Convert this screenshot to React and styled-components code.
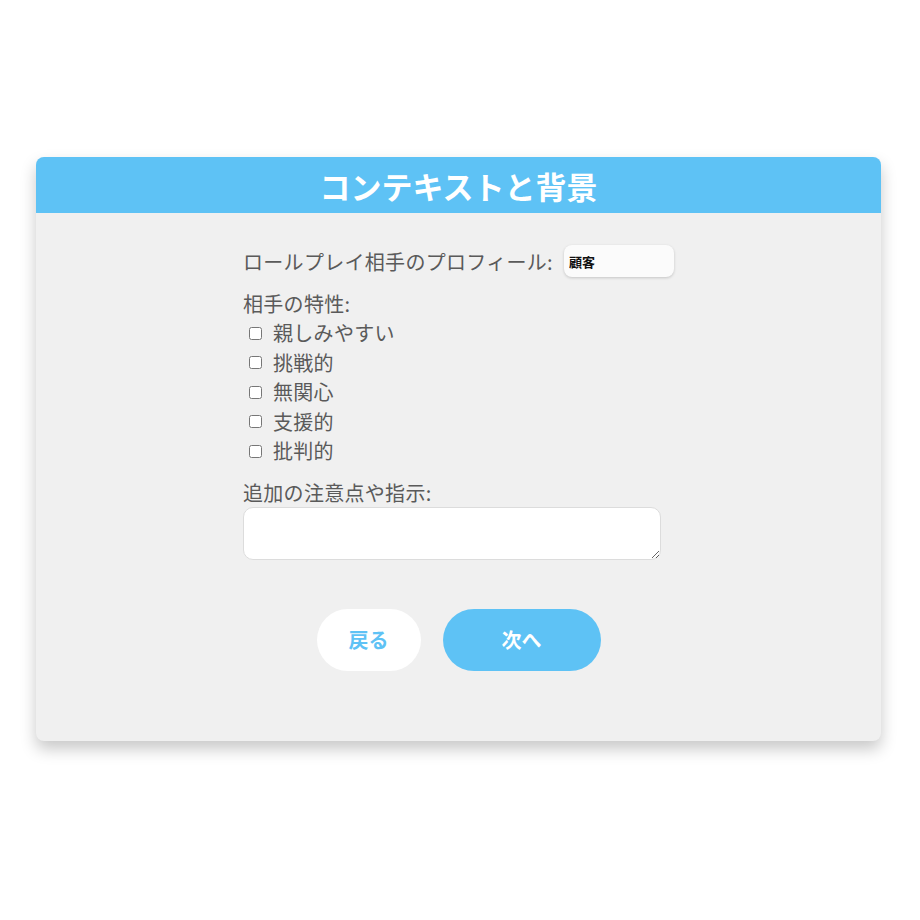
import React, { useState } from "react";
import styled, { createGlobalStyle } from "styled-components";

const GlobalStyle = createGlobalStyle`
  html, body {
    margin: 0;
    padding: 0;
    background: #ffffff;
  }
  body {
    font-family: "Noto Sans CJK JP", "Noto Sans", sans-serif;
  }
`;

const Page = styled.div`
  width: 920px;
  min-height: 920px;
  padding: 157px 0 0 36px;
  box-sizing: border-box;
`;

const Card = styled.section`
  width: 845px;
  background: #f0f0f0;
  border-radius: 8px;
  overflow: hidden;
  box-shadow: 0 8px 16px rgba(0, 0, 0, 0.22);
`;

const Header = styled.h2`
  margin: 0;
  height: 56px;
  display: flex;
  align-items: center;
  justify-content: center;
  background: #5ec2f5;
  color: #ffffff;
  font-size: 31px;
  font-weight: 700;
`;

const Body = styled.div`
  display: flex;
  flex-direction: column;
  align-items: center;
  padding: 32px 0 70px;
`;

const Form = styled.div`
  display: flex;
  flex-direction: column;
  width: 431px;
  color: #5a5a5a;
  font-size: 20px;
  letter-spacing: 0.3px;
`;

const ProfileRow = styled.label`
  display: flex;
  align-items: center;
  gap: 11px;
  height: 32px;
  white-space: nowrap;
`;

const TextInput = styled.input`
  width: 110px;
  height: 32px;
  box-sizing: border-box;
  border: none;
  border-radius: 8px;
  background: #fbfbfb;
  box-shadow: 0 1px 3px rgba(0, 0, 0, 0.18);
  padding: 0 5px;
  font-family: "Noto Sans CJK JP", sans-serif;
  font-size: 13px;
  font-weight: 700;
  letter-spacing: 0;
  color: #111;
  outline: none;
`;

const SectionLabel = styled.div`
  margin-top: ${(p) => p.$top || 0}px;
  line-height: 29px;
`;

const CheckRow = styled.label`
  display: flex;
  align-items: center;
  line-height: 29.5px;
`;

const Check = styled.input.attrs({ type: "checkbox" })`
  width: 13px;
  height: 13px;
  margin: 1px 11px 0 6px;
`;

const Notes = styled.textarea`
  width: 418px;
  height: 53px;
  box-sizing: border-box;
  border: 1px solid #dcdcdc;
  border-radius: 10px;
  background: #ffffff;
  padding: 6px 8px;
  font-family: "Noto Sans CJK JP", sans-serif;
  font-size: 14px;
  outline: none;
`;

const Buttons = styled.div`
  display: flex;
  gap: 22px;
  margin-top: 49px;
`;

const Button = styled.button`
  height: 62px;
  width: ${(p) => p.$w}px;
  border: none;
  border-radius: 31px;
  background: ${(p) => (p.$primary ? "#5ec2f5" : "#ffffff")};
  color: ${(p) => (p.$primary ? "#ffffff" : "#5ec2f5")};
  font-family: "Noto Sans CJK JP", sans-serif;
  font-size: 20px;
  font-weight: 700;
  cursor: pointer;
`;

const traits = ["親しみやすい", "挑戦的", "無関心", "支援的", "批判的"];

export default function App() {
  const [profile, setProfile] = useState("顧客");
  return (
    <Page>
      <GlobalStyle />
      <Card>
        <Header>コンテキストと背景</Header>
        <Body>
          <Form>
            <ProfileRow>
              ロールプレイ相手のプロフィール:
              <TextInput value={profile} onChange={(e) => setProfile(e.target.value)} />
            </ProfileRow>
            <SectionLabel $top={12}>相手の特性:</SectionLabel>
            {traits.map((t) => (
              <CheckRow key={t}>
                <Check />
                {t}
              </CheckRow>
            ))}
            <SectionLabel $top={12}>追加の注意点や指示:</SectionLabel>
            <Notes />
          </Form>
          <Buttons>
            <Button $w={104}>戻る</Button>
            <Button $w={158} $primary>次へ</Button>
          </Buttons>
        </Body>
      </Card>
    </Page>
  );
}
